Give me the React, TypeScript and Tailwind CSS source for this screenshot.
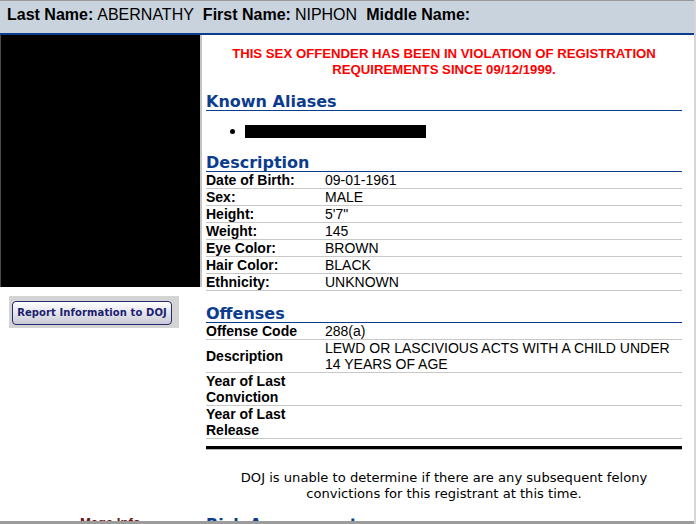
const description = [
  ["Date of Birth:", "09-01-1961"],
  ["Sex:", "MALE"],
  ["Height:", "5'7\""],
  ["Weight:", "145"],
  ["Eye Color:", "BROWN"],
  ["Hair Color:", "BLACK"],
  ["Ethnicity:", "UNKNOWN"],
]

function SectionHeading({ title, className }: { title: string; className?: string }) {
  return (
    <h2
      className={`font-['DejaVu_Sans',Verdana,sans-serif] text-[16px] font-bold leading-[17px] text-[#0b3c8e] border-b border-[#0b3c8e] ${className ?? ""}`}
    >
      {title}
    </h2>
  )
}

export default function App() {
  return (
    <div className="relative w-[696px] h-[524px] overflow-hidden bg-white font-['Liberation_Sans',Arial,sans-serif] text-black border-r-2 border-[#d6d6d6]">
      {/* name bar */}
      <div className="h-[35px] border-t border-[#9a9a9a] bg-[#c9d3dd] border-b-[2px] border-b-[#0b3c8e] pl-[7px] flex items-center text-[16px] leading-[18px] pb-[5px]">
        <span className="font-bold">Last Name:</span>
        <span className="ml-[4px]">ABERNATHY</span>
        <span className="font-bold ml-[9px]">First Name:</span>
        <span className="ml-[4px]">NIPHON</span>
        <span className="font-bold ml-[9px]">Middle Name:</span>
      </div>

      <div className="flex">
        {/* photo column */}
        <div className="w-[206px] shrink-0">
          <div className="h-[252px] w-[202px] bg-black border-l border-l-[#4a4a4a] border-r-2 border-r-[#c4c4c4]" />
          <div className="mt-[9px] ml-[9px] w-[170px] h-[32px] bg-[#d4d4d4] pt-[3px] pl-[3px]">
            <button className="w-[160px] h-[24px] rounded-[4px] border-[1.5px] border-[#27286e] bg-gradient-to-b from-white to-[#c9cad6] text-[#1c2070] font-['DejaVu_Sans',Verdana,sans-serif] text-[10px] font-bold tracking-[0.1px] shadow-[inset_0_1px_0_#fff]">
              Report Information to DOJ
            </button>
          </div>
          <div className="mt-[187px] ml-[80px] text-[13px] leading-[15px] font-bold text-[#6b1414]">Mega Info</div>
        </div>

        {/* details column */}
        <div className="w-[476px] shrink-0">
          <p className="pt-[11px] text-center text-[13.2px] leading-[16px] font-bold text-[#ff0000]">
            THIS SEX OFFENDER HAS BEEN IN VIOLATION OF REGISTRATION
            <br />
            REQUIREMENTS SINCE 09/12/1999.
          </p>

          <SectionHeading title="Known Aliases" className="mt-[15px]" />
          <ul className="mt-[12px] pl-[24px]">
            <li className="flex items-center h-[16px]">
              <span className="w-[5px] h-[5px] rounded-full bg-black" />
              <span className="ml-[10px] w-[181px] h-[13px] bg-black" />
            </li>
          </ul>

          <SectionHeading title="Description" className="mt-[15px]" />
          <div className="text-[14px] leading-[16px]">
            {description.map(([label, value]) => (
              <div key={label} className="grid grid-cols-[119px_1fr] border-b border-[#c8c8c8]">
                <span className="font-bold">{label}</span>
                <span>{value}</span>
              </div>
            ))}
          </div>

          <SectionHeading title="Offenses" className="mt-[14px]" />
          <div className="text-[14px] leading-[16px]">
            <div className="grid grid-cols-[119px_1fr] border-b border-[#c8c8c8]">
              <span className="font-bold">Offense Code</span>
              <span>288(a)</span>
            </div>
            <div className="grid grid-cols-[119px_1fr] items-center border-b border-[#c8c8c8]">
              <span className="font-bold">Description</span>
              <span className="whitespace-nowrap">
                LEWD OR LASCIVIOUS ACTS WITH A CHILD UNDER
                <br />
                14 YEARS OF AGE
              </span>
            </div>
            <div className="grid grid-cols-[119px_1fr] border-b border-[#c8c8c8]">
              <span className="font-bold">
                Year of Last
                <br />
                Conviction
              </span>
              <span />
            </div>
            <div className="grid grid-cols-[119px_1fr] border-b border-[#c8c8c8]">
              <span className="font-bold">
                Year of Last
                <br />
                Release
              </span>
              <span />
            </div>
          </div>

          <div className="mt-[7px] border-t-[3px] border-black border-b border-b-[#b8b8b8]" />

          <p className="mt-[20px] text-center font-['DejaVu_Sans',Verdana,sans-serif] text-[13.1px] leading-[16px]">
            DOJ is unable to determine if there are any subsequent felony
            <br />
            convictions for this registrant at this time.
          </p>

          <div className="mt-[13px] flex items-start">
            <h2 className="font-['DejaVu_Sans',Verdana,sans-serif] text-[16px] font-bold leading-[19px] text-[#0b3c8e]">
              Risk Assessment
            </h2>
            <span className="ml-[78px] mt-[2px] text-[13px] text-[#555]">Show On Map</span>
          </div>
        </div>
      </div>

      {/* window edge */}
      <div className="absolute bottom-0 left-0 right-0 h-[3px] bg-[#9c9c9c]" />
    </div>
  )
}
